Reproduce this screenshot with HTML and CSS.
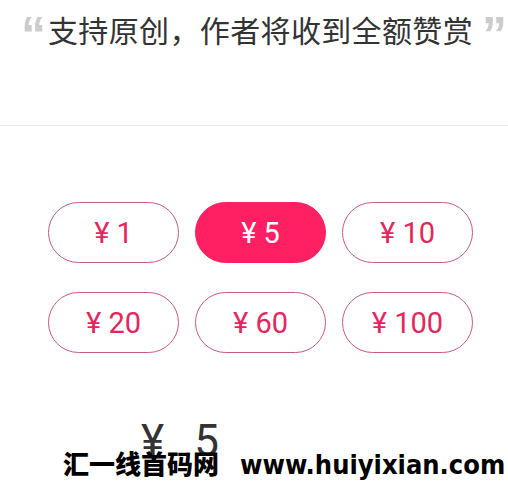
FILE: index.html
```html
<!DOCTYPE html>
<html lang="zh">
<head>
<meta charset="utf-8">
<link rel="stylesheet" href="styles.css">
</head>
<body>
<div class="page">
  <header class="head">
    <span class="quote">“</span>
    <span class="title">支持原创，作者将收到全额赞赏</span>
    <span class="quote">”</span>
  </header>
  <div class="amounts">
    <div class="btn">¥ 1</div>
    <div class="btn active">¥ 5</div>
    <div class="btn">¥ 10</div>
    <div class="btn">¥ 20</div>
    <div class="btn">¥ 60</div>
    <div class="btn">¥ 100</div>
  </div>
  <div class="total"><span class="yen">¥</span><span class="num">5</span></div>
  <div class="mark">汇一线首码网<span class="url">www.huiyixian.com</span></div>
</div>
</body>
</html>
```
FILE: styles.css
```css
html, body {
  margin: 0;
  padding: 0;
  background: #fff;
}
.page {
  position: relative;
  width: 508px;
  height: 483px;
  overflow: hidden;
  font-family: Roboto, "Noto Sans CJK SC", sans-serif;
}
.head {
  height: 111px;
  padding: 14px 0 0 21px;
  display: flex;
  align-items: flex-start;
  border-bottom: 1px solid #e6e6e6;
}
.title {
  font-family: "Noto Sans CJK SC", sans-serif;
  font-size: 30px;
  line-height: 30px;
  letter-spacing: 0.36px;
  color: #333;
  margin: 0 9px 0 8px;
  white-space: nowrap;
}
.quote {
  font-family: "Liberation Sans", sans-serif;
  font-weight: bold;
  font-size: 50px;
  line-height: 50px;
  margin-top: -4px;
  color: #cccccc;
  width: 19px;
}
.amounts {
  display: grid;
  grid-template-columns: repeat(3, 131px);
  grid-auto-rows: 61px;
  column-gap: 16px;
  row-gap: 29px;
  padding: 76px 0 0 48px;
}
.btn {
  box-sizing: border-box;
  border: 1px solid #c65a80;
  border-radius: 31px;
  display: flex;
  align-items: center;
  justify-content: center;
  font-size: 29px;
  color: #e2275f;
  white-space: pre;
}
.btn.active {
  background: #ff1f63;
  border-color: #ff1f63;
  color: #fff;
}
.total {
  padding: 66px 0 0 141px;
  font-size: 44px;
  line-height: 44px;
  color: #333;
  display: flex;
}
.total .num {
  margin-left: 30px;
}
.mark {
  position: absolute;
  left: 63px;
  top: 445px;
  font-family: "Noto Sans CJK SC", sans-serif;
  font-weight: 900;
  font-size: 26px;
  line-height: 36px;
  color: #000;
  white-space: nowrap;
}
.mark .url {
  font-family: "DejaVu Sans Condensed", "DejaVu Sans", sans-serif;
  font-stretch: condensed;
  font-weight: bold;
  font-size: 27px;
  margin-left: 21px;
}
```
